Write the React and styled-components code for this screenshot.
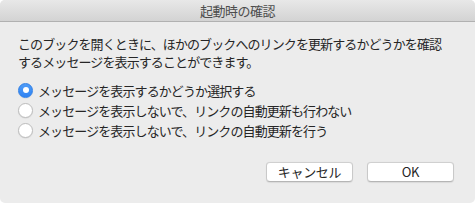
import React, { useState } from "react";
import styled, { createGlobalStyle } from "styled-components";

const Global = createGlobalStyle`
  html, body { margin: 0; padding: 0; background: #ffffff; }
  body { font-family: "Noto Sans CJK JP", "Noto Sans", sans-serif; }
`;

const Window = styled.div`
  width: 475px;
  height: 203px;
  box-sizing: border-box;
  background: #ececec;
  border-radius: 5px;
  overflow: hidden;
  display: flex;
  flex-direction: column;
`;

const TitleBar = styled.div`
  height: 21px;
  flex: none;
  background: linear-gradient(#e8e8e8, #d3d3d3);
  border-bottom: 1px solid #b1b1b1;
  display: flex;
  align-items: center;
  justify-content: center;
  font-size: 13px;
  color: #4d4d4d;
  line-height: 21px;
  letter-spacing: -0.5px;
`;

const Body = styled.div`
  flex: 1;
  display: flex;
  flex-direction: column;
  padding: 13px 21px 21px 18px;
`;

const Message = styled.p`
  margin: 0;
  font-size: 13px;
  line-height: 17px;
  color: #262626;
  letter-spacing: -0.9px;
  white-space: nowrap;
`;

const MessageLine = styled.span`
  display: block;
  height: 17px;
  & + & {
    margin-top: 1px;
  }
`;

const Options = styled.div`
  margin-top: 10px;
  display: flex;
  flex-direction: column;
`;

const OptionRow = styled.label`
  height: 20px;
  display: flex;
  align-items: center;
  gap: 5px;
  font-size: 13px;
  color: #262626;
  cursor: default;
  letter-spacing: -0.9px;
  white-space: nowrap;
`;

const Radio = styled.span`
  width: 15px;
  height: 15px;
  flex: none;
  box-sizing: border-box;
  border-radius: 50%;
  display: flex;
  align-items: center;
  justify-content: center;
  background: ${(p) => (p.$checked ? "linear-gradient(#4f9cf7, #2f83f3)" : "#ffffff")};
  border: 1px solid ${(p) => (p.$checked ? "#2f7fe6" : "#bdbdbd")};
  box-shadow: 0 0.5px 1px rgba(0, 0, 0, 0.1);
  &::after {
    content: "";
    width: 6px;
    height: 6px;
    border-radius: 50%;
    background: #ffffff;
    display: ${(p) => (p.$checked ? "block" : "none")};
  }
`;

const Footer = styled.div`
  margin-top: auto;
  display: flex;
  justify-content: flex-end;
  gap: 14px;
`;

const Button = styled.button`
  width: 87px;
  height: 20px;
  box-sizing: border-box;
  padding: 0;
  background: #ffffff;
  border: 1px solid #c9c9c9;
  border-top-color: #d0d0d0;
  border-bottom-color: #b5b5b5;
  border-radius: 4px;
  box-shadow: 0 0.5px 1px rgba(0, 0, 0, 0.08);
  font-family: "Noto Sans CJK JP", "Noto Sans", sans-serif;
  font-size: 13px;
  line-height: 18px;
  color: #262626;
  letter-spacing: -0.3px;
`;

const options = [
  "メッセージを表示するかどうか選択する",
  "メッセージを表示しないで、リンクの自動更新も行わない",
  "メッセージを表示しないで、リンクの自動更新を行う",
];

export default function App() {
  const [sel, setSel] = useState(0);
  return (
    <>
      <Global />
      <Window>
        <TitleBar>起動時の確認</TitleBar>
        <Body>
          <Message>
            <MessageLine>このブックを開くときに、ほかのブックへのリンクを更新するかどうかを確認</MessageLine>
            <MessageLine>するメッセージを表示することができます。</MessageLine>
          </Message>
          <Options>
            {options.map((o, i) => (
              <OptionRow key={i} onClick={() => setSel(i)}>
                <Radio $checked={sel === i} />
                {o}
              </OptionRow>
            ))}
          </Options>
          <Footer>
            <Button>キャンセル</Button>
            <Button>OK</Button>
          </Footer>
        </Body>
      </Window>
    </>
  );
}
